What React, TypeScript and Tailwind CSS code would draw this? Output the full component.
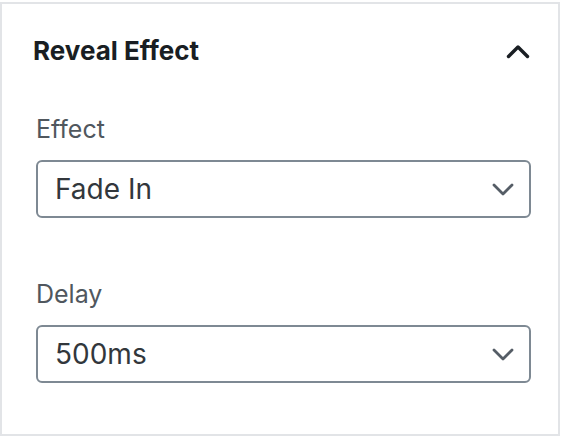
import React from 'react';

const font = { fontFamily: 'Inter, "Liberation Sans", sans-serif' };

const ChevronDown = () => (
  <svg width="22" height="13" viewBox="0 0 22 13" fill="none" className="shrink-0">
    <path d="M2 2 L11 11 L20 2" stroke="#555d66" strokeWidth="2.8" strokeLinecap="round" strokeLinejoin="round" />
  </svg>
);

const ChevronUp = () => (
  <svg width="24" height="15" viewBox="0 0 24 15" fill="none" className="shrink-0">
    <path d="M2.5 12.5 L12 3 L21.5 12.5" stroke="#191e23" strokeWidth="3.4" strokeLinecap="round" strokeLinejoin="round" />
  </svg>
);

interface SelectFieldProps {
  label: string;
  value: string;
}

const SelectField: React.FC<SelectFieldProps> = ({ label, value }) => (
  <div className="flex flex-col">
    <span className="text-[25px] leading-[28px] text-[#50575e]">{label}</span>
    <div className="mt-[17px] h-[58px] flex items-center justify-between border-2 border-[#7e8993] rounded-[6px] pl-[17px] pr-[15px]">
      <span className="text-[28px] leading-[34px] text-[#32373c]">{value}</span>
      <ChevronDown />
    </div>
  </div>
);

export default function App() {
  return (
    <div className="bg-white w-[562px] h-[438px] pt-[2px]" style={font}>
      <div className="w-[560px] h-[434px] border-2 border-[#e2e4e7] pl-[34px] pr-[27px] pt-[31px]">
        {/* Header */}
        <div className="flex items-center justify-between">
          <h2 className="text-[26px] leading-[32px] font-bold text-[#191e23] -ml-[3px]">Reveal Effect</h2>
          <div className="mr-[1px] mt-[1px]">
            <ChevronUp />
          </div>
        </div>

        <div className="mt-[48px] flex flex-col gap-[62px]">
          <SelectField label="Effect" value="Fade In" />
          <SelectField label="Delay" value="500ms" />
        </div>
      </div>
    </div>
  );
}
